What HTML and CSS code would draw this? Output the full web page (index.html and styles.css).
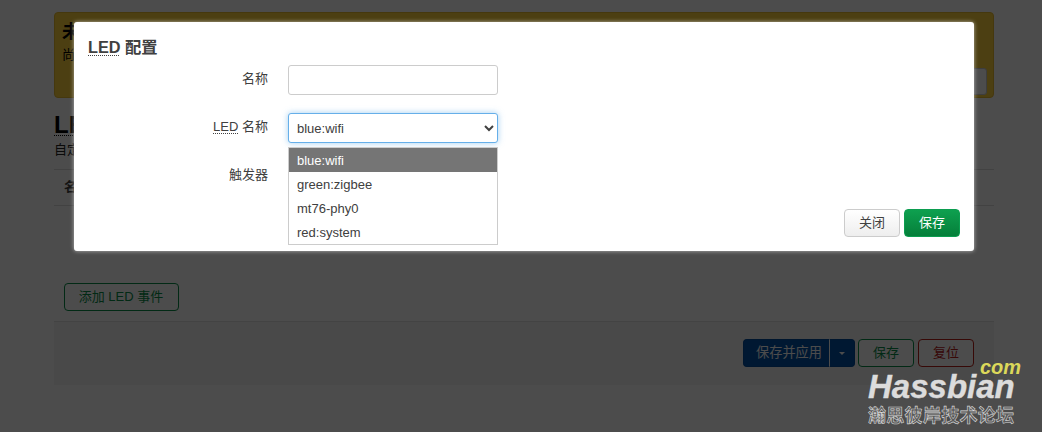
FILE: index.html
```html
<!DOCTYPE html>
<html lang="zh-CN">
<head>
<meta charset="utf-8">
<title>LED 配置</title>
<link rel="stylesheet" href="styles.css">
</head>
<body>
<main class="page">
  <div class="alert">
    <h4 class="alert-title">未</h4>
    <p class="alert-text">尚</p>
    <div class="alert-actions"><button class="btn-plain" type="button"></button></div>
  </div>
  <h2 class="page-title"><abbr class="dotted">LED</abbr> 配置</h2>
  <p class="page-desc">自定义 LED 的行为</p>
  <div class="table-head">名称</div>
  <div class="table-empty"></div>
  <div class="add-row"><button class="btn btn-outline-green" type="button">添加 LED 事件</button></div>
  <div class="actions">
    <div class="split">
      <button class="split-main" type="button">保存并应用</button>
      <button class="split-caret" type="button" aria-label="更多"><span class="caret"></span></button>
    </div>
    <button class="btn btn-outline-green small" type="button">保存</button>
    <button class="btn btn-outline-red small" type="button">复位</button>
  </div>
</main>

<div class="overlay"></div>

<section class="modal">
  <h4 class="modal-title"><abbr class="dotted">LED</abbr> 配置</h4>
  <div class="form-row">
    <label class="form-label">名称</label>
    <input class="control" type="text">
  </div>
  <div class="form-row">
    <label class="form-label"><abbr class="dotted">LED</abbr> 名称</label>
    <select class="control focused">
      <option>blue:wifi</option>
      <option>green:zigbee</option>
      <option>mt76-phy0</option>
      <option>red:system</option>
    </select>
  </div>
  <div class="form-row">
    <label class="form-label">触发器</label>
    <div class="control-space"></div>
  </div>
  <div class="modal-footer">
    <button class="btn-close" type="button">关闭</button>
    <button class="btn-save" type="button">保存</button>
  </div>
  <ul class="dropdown">
    <li class="selected">blue:wifi</li>
    <li>green:zigbee</li>
    <li>mt76-phy0</li>
    <li>red:system</li>
  </ul>
</section>

<div class="watermark">
  <span class="wm-com">com</span>
  <span class="wm-name">Hassbian</span>
  <span class="wm-sub">瀚思彼岸技术论坛</span>
</div>
</body>
</html>
```
FILE: styles.css
```css
* { box-sizing: border-box; }
html, body { margin: 0; height: 432px; overflow: hidden; }
body {
  background: #fff;
  color: #404040;
  font: 13px/18px "Liberation Sans", "Noto Sans CJK SC", sans-serif;
  position: relative;
}
button { font: inherit; margin: 0; cursor: pointer; }
abbr.dotted { text-decoration: underline dotted; text-underline-offset: 2px; text-decoration-thickness: 1px; }

.page { padding: 12px 48px 0 54px; }
.alert {
  height: 86px;
  background: #ffd23f;
  border: 1px solid #e8bd30;
  border-radius: 4px;
  padding: 8px 6px 2px 7px;
  display: flex;
  flex-direction: column;
  color: #000;
}
.alert-title { margin: 0; font-size: 18px; line-height: 23px; font-weight: 700; }
.alert-text { margin: 2px 0 0; font-size: 13px; line-height: 18px; }
.alert-actions { margin-top: auto; display: flex; justify-content: flex-end; }
.btn-plain {
  width: 60px; height: 27px;
  background: #fff; border: 1px solid #ccc; border-radius: 3px;
}
.page-title { margin: 12px 0 0; font-size: 24px; line-height: 30px; font-weight: 700; color: #000; }
.page-desc { margin: 2px 0 0; line-height: 16px; color: #222; }
.table-head {
  margin-top: 11px;
  height: 37px;
  padding: 0 10px;
  line-height: 33px;
  border-top: 1px solid #ddd;
  border-bottom: 1px solid #ddd;
  font-weight: 700;
}
.table-empty { height: 77px; }
.add-row { padding-left: 10px; height: 38px; }
.btn {
  height: 28px; padding: 0 14px;
  background: #fff; border-radius: 4px; line-height: 26px; border: 1px solid;
}
.btn-outline-green { border-color: #088c48; color: #088c48; }
.btn-outline-red { border-color: #b8201a; color: #b8201a; }
.add-row .btn { width: 115px; padding: 0 13px 0 12px; }
.btn.small { width: 56px; padding: 0; }
.actions {
  height: 64px;
  background: #f5f5f5;
  border-top: 1px solid #e2e2e2;
  padding: 17px 20px 0 0;
  display: flex;
  justify-content: flex-end;
  gap: 4px;
}
.split { display: flex; height: 28px; margin-right: -1px; width: 112px; }
.split-main, .split-caret { background: #0052a8; color: #fff; border: 1px solid #004a9a; height: 28px; padding: 0; }
.split-main { flex: 1; border-right: 0; border-radius: 4px 0 0 4px; padding-left: 5px; font-size: 13.2px; }
.split-caret { width: 26px; border-left: 1px solid #fff; border-radius: 0 4px 4px 0; display: flex; align-items: center; justify-content: center; }
.caret { width: 0; height: 0; border: 3px solid transparent; border-top: 3px solid #fff; border-bottom: 0; }

.overlay { position: absolute; inset: 0; background: rgba(0, 0, 0, .7); }

.modal {
  position: absolute;
  left: 74px; top: 22px;
  width: 900px; height: 229px;
  background: #fff;
  border-radius: 3px;
  box-shadow: 0 0 4px rgba(255, 255, 255, .6);
  padding: 15px 14px 0;
}
.modal-title { margin: 0 0 8px; font-size: 16.3px; line-height: 20px; font-weight: 700; color: #404040; }
.form-row { display: flex; align-items: center; height: 30px; margin-bottom: 18px; }
.form-label { width: 180px; text-align: right; margin-right: 20px; padding-bottom: 2px; color: #404040; }
.control {
  width: 210px; height: 30px;
  border: 1px solid #ccc; border-radius: 3px;
  background: #fff; color: #404040;
  font: inherit; padding: 0 8px; margin: 0;
}
select.control { padding: 0 4px; }
.control.focused { border-color: #66afe9; box-shadow: 0 0 6px rgba(102, 175, 233, .6); outline: 0; }
.control-space { width: 210px; height: 30px; }
.modal-footer { position: absolute; right: 14px; bottom: 14px; display: flex; gap: 4px; }
.btn-close {
  width: 56px; height: 28px; padding: 0;
  border: 1px solid #ccc; border-radius: 4px; color: #404040;
  background: linear-gradient(#fff, #eee);
}
.btn-save {
  width: 56px; height: 28px; padding: 0;
  border: 1px solid #0c9d50; border-radius: 4px; color: #fff;
  background: linear-gradient(#0ea04f, #057f3a);
}
.dropdown {
  position: absolute;
  left: 214px; top: 125px;
  width: 210px; height: 98px;
  margin: 0; padding: 0; list-style: none;
  background: #fff;
  border: 1px solid #ccc;
  color: #404040;
}
.dropdown li { height: 24px; line-height: 26px; padding-left: 8px; }
.dropdown li.selected { background: #757575; color: #fff; }

.watermark {
  position: absolute;
  left: 866px; top: 360px;
  width: 170px; height: 68px;
}
.wm-com { position: absolute; left: 114px; top: -1px; font: italic 700 20px/16px "Liberation Sans", sans-serif; color: #dcd85a; }
.wm-name { position: absolute; left: 2px; top: 12px; font: italic 700 33px/30px "Liberation Sans", sans-serif; color: #dcdcdc; -webkit-text-stroke: .4px #dcdcdc; }
.wm-sub { position: absolute; left: 2px; top: 44px; font: 700 18px/20px "Noto Sans CJK SC", sans-serif; color: #5a5a5a; -webkit-text-stroke: .6px #d8d8d8; letter-spacing: .3px; white-space: nowrap; }
```
